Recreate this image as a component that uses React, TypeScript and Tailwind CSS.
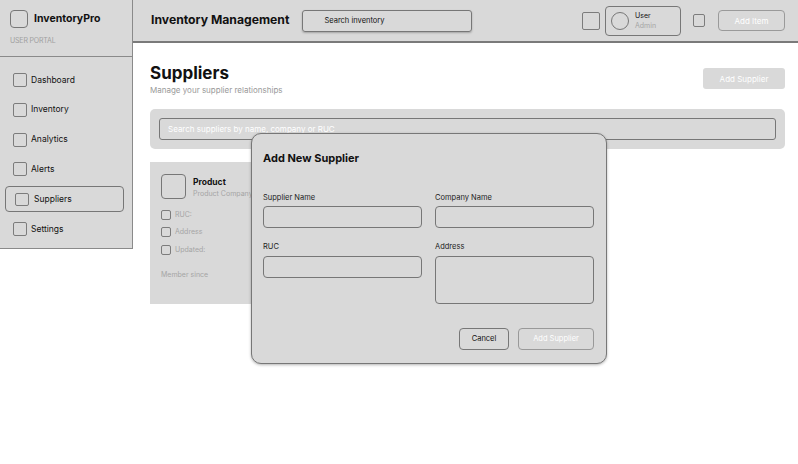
import React from 'react';

const navItems = ['Dashboard', 'Inventory', 'Analytics', 'Alerts', 'Suppliers', 'Settings'];

function Box({ className = '' }: { className?: string }) {
  return <div className={`border border-[#7c7c7c] rounded-[2px] ${className}`} />;
}

function Field({ label, tall }: { label: string; tall?: boolean }) {
  return (
    <div className="flex flex-col">
      <span className="text-[7.5px] text-[#222] leading-none">{label}</span>
      <div className={`mt-[5px] border border-[#777] rounded-[4px] ${tall ? 'h-[48px]' : 'h-[22px]'}`} />
    </div>
  );
}

export default function App() {
  return (
    <div
      className="relative flex w-[798px] h-[464px] bg-white overflow-hidden text-[#111]"
      style={{ fontFamily: 'Inter, "Noto Sans", sans-serif' }}
    >
      {/* Sidebar */}
      <aside className="w-[133px] h-[249px] shrink-0 bg-[#d9d9d9] border-r border-b border-[#8a8a8a] flex flex-col">
        <div className="h-[57px] border-b border-[#8a8a8a] px-[10px] pt-[10px]">
          <div className="flex items-center gap-[6px]">
            <div className="w-[18px] h-[18px] rounded-[4px] border border-[#777]" />
            <span className="text-[10.5px] font-bold">InventoryPro</span>
          </div>
          <div className="mt-[8px] text-[7px] text-[#a0a0a0] tracking-tight">USER PORTAL</div>
        </div>
        <nav className="flex flex-col gap-[3.8px] pl-[5px] pr-[8px] pt-[10px]">
          {navItems.map((item) =>
            item === 'Suppliers' ? (
              <div
                key={item}
                className="h-[26px] flex items-center gap-[5px] px-[9px] border border-[#777] rounded-[4px]"
              >
                <Box className="w-[14px] h-[13px]" />
                <span className="text-[8.5px]">{item}</span>
              </div>
            ) : (
              <div key={item} className="h-[26px] flex items-center gap-[4px] px-[8px]">
                <Box className="w-[14px] h-[14px]" />
                <span className="text-[8.5px]">{item}</span>
              </div>
            )
          )}
        </nav>
      </aside>

      {/* Main */}
      <div className="flex-1 flex flex-col">
        <header className="h-[43px] bg-[#d9d9d9] border-b-2 border-[#7a7a7a] flex items-center pl-[18px] pr-[13px]">
          <h1 className="text-[12.2px] font-bold">Inventory Management</h1>
          <div className="ml-[13px] w-[170px] h-[22px] border border-[#777] rounded-[3px] shadow-[0_1px_2px_rgba(0,0,0,0.25)] flex items-center pl-[21px]">
            <span className="text-[7.5px]">Search inventory</span>
          </div>
          <div className="ml-auto flex items-center">
            <Box className="w-[18px] h-[18px]" />
            <div className="ml-[5px] w-[76px] h-[30px] border border-[#777] rounded-[4px] flex items-center px-[5px] gap-[6px]">
              <div className="w-[18px] h-[18px] rounded-full border border-[#777]" />
              <div className="flex flex-col leading-[10px]">
                <span className="text-[7px]">User</span>
                <span className="text-[7px] text-[#a5a5a5]">Admin</span>
              </div>
            </div>
            <Box className="ml-[12px] w-[12px] h-[13px]" />
            <div className="ml-[13px] w-[67px] h-[21px] border border-[#9a9a9a] rounded-[4px] flex items-center justify-center">
              <span className="text-[8px] text-white">Add Item</span>
            </div>
          </div>
        </header>

        <main className="flex-1 pl-[17px] pr-[13px] pt-[20px]">
          <div className="flex items-start justify-between">
            <div>
              <h2 className="text-[17px] font-bold leading-[20px]">Suppliers</h2>
              <p className="mt-[1px] text-[8px] text-[#999]">Manage your supplier relationships</p>
            </div>
            <div className="mt-[5px] w-[82px] h-[21px] bg-[#d9d9d9] rounded-[3px] flex items-center justify-center">
              <span className="text-[8px] text-white">Add Supplier</span>
            </div>
          </div>

          <div className="mt-[13px] h-[40px] bg-[#d9d9d9] rounded-[5px] px-[9px] flex items-center">
            <div className="w-full h-[22px] border border-[#777] rounded-[3px] flex items-center px-[8px]">
              <span className="text-[8px] text-white">Search suppliers by name, company or RUC</span>
            </div>
          </div>

          <div className="mt-[13px] w-[150px] h-[142px] bg-[#d9d9d9] px-[11px] pt-[12px]">
            <div className="flex gap-[7px]">
              <div className="w-[25px] h-[25px] border border-[#777] rounded-[4px]" />
              <div className="pt-[3px]">
                <div className="text-[8.5px] font-bold leading-[10px]">Product</div>
                <div className="text-[7px] text-[#a5a5a5] mt-[2px]">Product Company</div>
              </div>
            </div>
            <div className="mt-[10px] flex flex-col gap-[7px]">
              {['RUC:', 'Address', 'Updated:'].map((r) => (
                <div key={r} className="flex items-center gap-[4px]">
                  <Box className="w-[10px] h-[10px]" />
                  <span className="text-[7px] text-[#a5a5a5]">{r}</span>
                </div>
              ))}
            </div>
            <div className="mt-[15px] text-[7px] text-[#a5a5a5]">Member since</div>
          </div>
        </main>
      </div>

      {/* Modal */}
      <div className="absolute left-[251px] top-[133px] w-[356px] h-[231px] bg-[#d9d9d9] border border-[#777] rounded-[10px] shadow-[0_1px_3px_rgba(0,0,0,0.3)] pl-[11px] pr-[12px] pt-[16px]">
        <h3 className="text-[11px] font-bold">Add New Supplier</h3>
        <div className="mt-[27px] grid grid-cols-2 gap-x-[13px] gap-y-[15px]">
          <Field label="Supplier Name" />
          <Field label="Company Name" />
          <div className="self-start">
            <Field label="RUC" />
          </div>
          <Field label="Address" tall />
        </div>
        <div className="mt-[24px] flex justify-end gap-[9px]">
          <div className="w-[50px] h-[22px] border border-[#777] rounded-[4px] flex items-center justify-center">
            <span className="text-[7.5px]">Cancel</span>
          </div>
          <div className="w-[76px] h-[22px] border border-[#999] rounded-[4px] flex items-center justify-center">
            <span className="text-[7.5px] text-white">Add Supplier</span>
          </div>
        </div>
      </div>
    </div>
  );
}
